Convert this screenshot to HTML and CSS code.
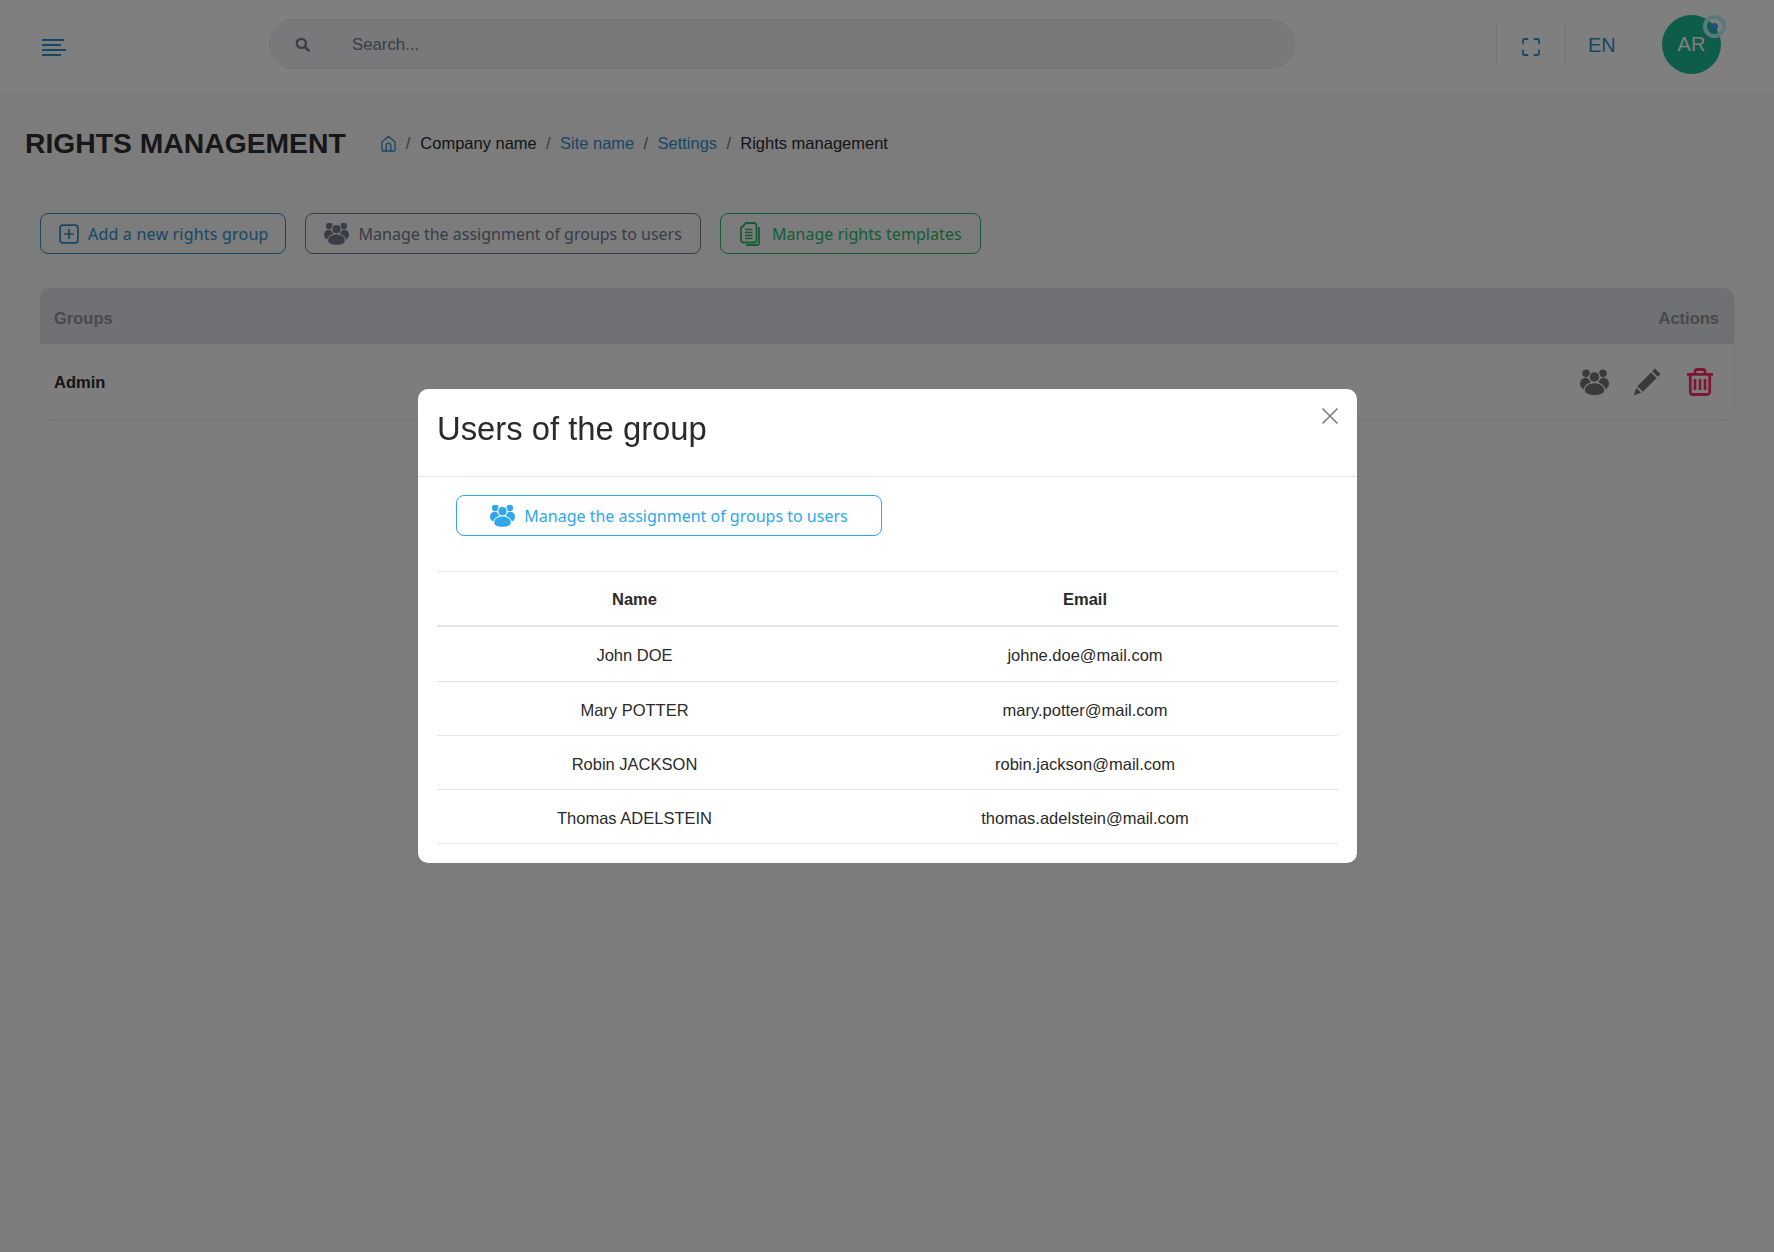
FILE: index.html
```html
<!DOCTYPE html>
<html lang="en">
<head>
<meta charset="utf-8">
<title>Rights management</title>
<link rel="stylesheet" href="styles.css">
</head>
<body>
<svg class="defs" width="0" height="0" aria-hidden="true">
  <mask id="gap" maskUnits="userSpaceOnUse" x="0" y="0" width="28" height="25">
    <rect width="28" height="25" fill="#fff"/>
    <circle cx="14" cy="7.600" r="5.800" fill="#000"/>
    <path d="M14 13.600c-5.500 0-9.300 3-9.300 6.600 0 3.300 4 4.800 9.300 4.800s9.300-1.500 9.300-4.800c0-3.600-3.800-6.600-9.300-6.600z" fill="#000" stroke="#000" stroke-width="2.200"/>
  </mask>
  <symbol id="users" viewBox="0 0 28 25">
    <circle cx="14" cy="7.600" r="4.600"/>
    <path d="M14 13.600c-5.500 0-9.300 3-9.300 6.600 0 3.300 4 4.800 9.300 4.800s9.300-1.500 9.300-4.800c0-3.600-3.800-6.600-9.300-6.600z"/>
    <g mask="url(#gap)">
      <circle cx="5.900" cy="4.100" r="3.700"/>
      <circle cx="22.100" cy="4.100" r="3.700"/>
      <ellipse cx="5.200" cy="14" rx="5.200" ry="5.600"/>
      <ellipse cx="22.800" cy="14" rx="5.200" ry="5.600"/>
    </g>
  </symbol>
</svg>

<header class="topbar">
  <div class="menu-icon" aria-label="Menu"><span class="m1"></span><span class="m2"></span><span></span><span class="m2"></span></div>
  <div class="search">
    <svg class="search-icon" viewBox="0 0 16 16"><circle cx="6.800" cy="6.800" r="4.900" fill="none" stroke="currentColor" stroke-width="2.400"/><path d="M10.500 10.500l4 4" stroke="currentColor" stroke-width="2.800" stroke-linecap="round"/></svg>
    <span class="search-divider"></span>
    <span class="search-text">Search...</span>
  </div>
  <div class="top-actions">
    <div class="fullscreen">
      <svg viewBox="0 0 18 18" class="fs-icon"><path d="M1 5.500V2.500A1.500 1.500 0 0 1 2.500 1H5.500M12.500 1h3A1.500 1.500 0 0 1 17 2.500v3M17 12.500v3a1.500 1.500 0 0 1-1.500 1.500h-3M5.500 17h-3A1.500 1.500 0 0 1 1 15.500v-3" fill="none" stroke="currentColor" stroke-width="1.800" stroke-linecap="round"/></svg>
    </div>
    <div class="lang">EN</div>
    <div class="avatar">AR<span class="pulse"><span class="pulse-dot"></span></span></div>
  </div>
</header>

<main class="page">
  <div class="title-row">
    <h1 class="page-title">RIGHTS MANAGEMENT</h1>
    <nav class="crumbs">
      <svg class="home" viewBox="0 0 16 18"><path d="M1 7.500L8 1.200l7 6.300V16a1 1 0 0 1-1 1H2a1 1 0 0 1-1-1z M5.500 17v-6a2.500 2.500 0 0 1 5 0v6" fill="none" stroke="currentColor" stroke-width="1.400" stroke-linejoin="round"/></svg>
      <span class="sep sep-first">/</span><span>Company name</span>
      <span class="sep">/</span><span class="link">Site name</span>
      <span class="sep">/</span><span class="link">Settings</span>
      <span class="sep">/</span><span>Rights management</span>
    </nav>
  </div>

  <div class="toolbar">
    <div class="btn btn-blue">
      <svg class="ico-plus" viewBox="0 0 18 18"><rect x="1" y="1" width="16" height="16" rx="2.500" fill="none" stroke="currentColor" stroke-width="1.600"/><path d="M9 4.500v9M4.500 9h9" stroke="currentColor" stroke-width="1.500"/></svg>
      Add a new rights group
    </div>
    <div class="btn btn-grey">
      <svg class="ico-users"><use href="#users"/></svg>
      Manage the assignment of groups to users
    </div>
    <div class="btn btn-green">
      <svg class="ico-files" viewBox="0 0 20 24"><path d="M19 5v16.500a1.500 1.500 0 0 1-1.500 1.500H6" fill="none" stroke="currentColor" stroke-width="1.800"/><path d="M6 1h8a2.500 2.500 0 0 1 2.500 2.500v15.500a1.500 1.500 0 0 1-1.500 1.500H3.500A2.500 2.500 0 0 1 1 18V6z" fill="none" stroke="currentColor" stroke-width="1.800" stroke-linejoin="round"/><path d="M5 7.500h7.500M5 10.500h7.500M5 13.500h7.500M5 16.500h7.500" stroke="currentColor" stroke-width="1.300"/></svg>
      Manage rights templates
    </div>
  </div>

  <section class="card">
    <div class="card-head"><span>Groups</span><span>Actions</span></div>
    <div class="card-row">
      <span class="group-name">Admin</span>
      <div class="row-actions">
        <svg class="act-users"><use href="#users"/></svg>
        <svg class="act-pen" viewBox="0 0 28 28"><path d="M22 .5l5.500 5.500-2.800 2.800-5.500-5.500zM18 4.500l5.500 5.500L9.800 23.700l-5.500-5.500z"/><path d="M3.300 19.800l4.900 4.900L.8 27.200z"/></svg>
        <svg class="act-trash" viewBox="0 0 26 28"><path d="M0 6.300h26M8 6.300V3.500A2 2 0 0 1 10 1.500h6a2 2 0 0 1 2 2v2.800M3.300 6.300v17.700a2.500 2.500 0 0 0 2.500 2.500h14.400a2.500 2.500 0 0 0 2.500-2.500V6.300" fill="none" stroke="currentColor" stroke-width="2.800"/><path d="M8 11v11M13 11v11M18 11v11" stroke="currentColor" stroke-width="2.600"/></svg>
      </div>
    </div>
  </section>
</main>

<div class="backdrop"></div>

<div class="modal" role="dialog">
  <div class="modal-head">
    <h2 class="modal-title">Users of the group</h2>
    <svg class="close" viewBox="0 0 18 18"><path d="M1.500 1.500l15 15M16.500 1.500l-15 15" stroke="currentColor" stroke-width="1.700"/></svg>
  </div>
  <div class="modal-body">
    <div class="btn btn-sky">
      <svg class="ico-users"><use href="#users"/></svg>
      Manage the assignment of groups to users
    </div>
    <table class="users">
      <thead><tr><th>Name</th><th>Email</th></tr></thead>
      <tbody>
        <tr><td>John DOE</td><td>johne.doe@mail.com</td></tr>
        <tr><td>Mary POTTER</td><td>mary.potter@mail.com</td></tr>
        <tr><td>Robin JACKSON</td><td>robin.jackson@mail.com</td></tr>
        <tr><td>Thomas ADELSTEIN</td><td>thomas.adelstein@mail.com</td></tr>
      </tbody>
    </table>
  </div>
</div>
</body>
</html>
```

FILE: styles.css
```css
* { box-sizing: border-box; }
html, body { margin: 0; height: 100%; }
body {
  min-height: 1252px;
  background: #f8f8fb;
  font-family: "Liberation Sans", Arial, sans-serif;
  font-size: 16.5px;
  color: #2a2a2a;
  overflow: hidden;
}
.defs { position: absolute; }

.topbar {
  height: 91px;
  background: #fff;
  display: flex;
  align-items: center;
  padding: 0 0 0 42px;
}
.menu-icon { width: 24px; display: flex; flex-direction: column; gap: 3px; margin-top: 3px; }
.menu-icon span { display: block; height: 2px; background: #2f8fc8; width: 24px; }
.menu-icon .m1 { width: 22px; }
.menu-icon .m2 { width: 19px; }

.search {
  margin-left: 203px;
  width: 1026px;
  height: 50px;
  border-radius: 25px;
  background: #f3f3f9;
  border: 1px solid #eceef3;
  display: flex;
  align-items: center;
  margin-top: -3px;
  padding-left: 25px;
}
.search-icon { width: 15px; height: 15px; color: #74788d; }
.search-divider { width: 1px; height: 28px; background: #e6e8ee; margin-left: 19px; }
.search-text { margin-left: 22px; padding-top: 2px; font-size: 16.800px; color: #74788d; }

.top-actions { display: flex; align-items: center; margin-left: 201px; height: 44px; margin-top: -1px; }
.fullscreen {
  width: 70px;
  height: 42px;
  padding-top: 4px;
  border-left: 1px solid #e9e9ef;
  border-right: 1px solid #e9e9ef;
  display: flex; align-items: center; justify-content: center;
}
.fs-icon { width: 18px; height: 18px; color: #2f8fc8; }
.lang { margin-left: 22px; font-size: 20px; color: #2f8fc8; width: 28px; }
.avatar {
  margin-left: 46px;
  margin-top: -2px;
  width: 59px; height: 59px; border-radius: 50%;
  background: #1cb894;
  color: #fff;
  font-size: 20px;
  display: flex; align-items: center; justify-content: center;
  position: relative;
}
.pulse {
  position: absolute; top: 0; right: -5px;
  width: 23px; height: 23px; border-radius: 50%;
  border: 4px solid #b8f0ff;
  display: flex; align-items: center; justify-content: center;
}
.pulse-dot { width: 7px; height: 7px; border-radius: 50%; background: #3c9cf5; }

.page { padding: 0 40px 0 25px; }
.title-row { display: flex; align-items: center; height: 100px; padding-top: 5px; }
.page-title { margin: 0; font-size: 28.300px; font-weight: 700; color: #2f2f2f; line-height: 1.2; }
.crumbs { margin: 0 0 0 35px; display: flex; align-items: center; font-size: 16.500px; }
.crumbs .sep { margin: 0 9.300px; color: #6c757d; }
.crumbs .sep-first { margin-left: 10px; margin-right: 10px; }
.home { width: 15px; height: 17px; color: #2f8fc8; }
.link { color: #2f8fc8; }

.toolbar { display: flex; gap: 19px; margin: 22px 0 0 15px; }
.btn {
  height: 41px;
  border-radius: 8px;
  border: 1px solid;
  display: inline-flex;
  align-items: center;
  font-family: "Noto Sans", sans-serif;
  font-size: 16px;
  padding: 0 18px;
  background: transparent;
  white-space: nowrap;
}
.btn-blue { color: #2f8fc8; border-color: #2f8fc8; letter-spacing: .2px; padding-right: 16px; }
.btn-grey { color: #74788d; border-color: #74788d; }
.btn-grey .ico-users { margin-right: 10px; }
.btn-green { color: #2bb866; border-color: #2bb866; letter-spacing: .05px; }
.btn-sky { color: #2ea7ee; border-color: #2ea7ee; justify-content: center; width: 426px; margin-left: 19px; background: #fff; }
.ico-plus { width: 20px; height: 20px; margin-right: 9px; }
.ico-users { width: 25px; height: 23px; fill: currentColor; margin-right: 9px; }
.ico-files { width: 22px; height: 24px; margin-right: 11px; }

.card { margin: 34px 0 0 15px; border-radius: 10px; background: #fbfbfd; box-shadow: 0 1px 2px rgba(0,0,0,.06); }
.card-head {
  height: 56px;
  background: #e0e2e8;
  border-radius: 10px 10px 0 0;
  border-bottom: 2px solid #dcdfe6;
  display: flex; justify-content: space-between; align-items: center;
  padding: 6px 15px 0 14px;
  font-weight: 700;
  color: #909399;
}
.card-row { height: 75px; display: flex; justify-content: space-between; align-items: center; padding: 2px 21px 0 14px; }
.group-name { font-weight: 700; }
.row-actions { display: flex; align-items: center; gap: 24px; margin-top: -2px; }
.act-users { width: 29px; height: 26px; fill: #747474; }
.act-pen { width: 28px; height: 28px; fill: #747474; }
.act-trash { width: 26px; height: 28px; margin-left: 2px; color: #ff2d5f; }

.backdrop { position: fixed; inset: 0; background: rgba(0,0,0,.5); }

.modal {
  position: absolute;
  left: 418px; top: 389px;
  width: 939px; height: 474px;
  background: #fff;
  border-radius: 10px;
}
.modal-head { height: 88px; border-bottom: 1px solid #e3e5ea; position: relative; padding: 20px 19px 0; }
.modal-title { margin: 0; font-size: 32.800px; font-weight: 400; line-height: 1.2; }
.close { position: absolute; top: 18px; right: 18px; width: 18px; height: 18px; color: #808080; }
.modal-body { padding: 18px 19px 0; }
.users { width: 901px; margin-top: 35px; border-collapse: collapse; table-layout: fixed; text-align: center; }
.users th, .users td { padding: 0; }
.users th { height: 54px; padding-top: 2px; font-weight: 700; border-top: 1px solid #e3e5ea; border-bottom: 2px solid #e3e5ea; }
.users td { height: 54px; padding-top: 4px; border-bottom: 1px solid #e3e5ea; }
.users tbody tr:first-child td { height: 56px; }
.users th:first-child { width: 395px; }
```
